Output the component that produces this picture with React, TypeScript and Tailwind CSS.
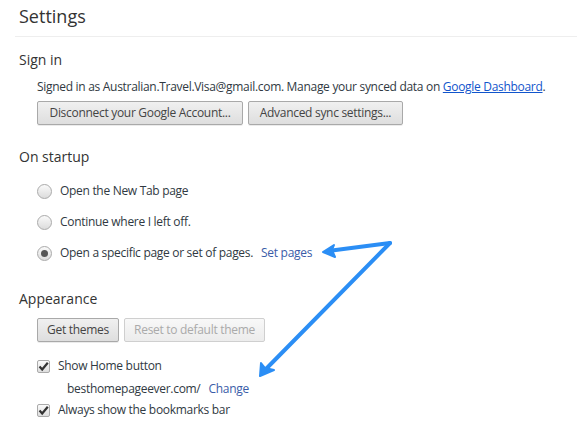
export default function App() {
  const btn =
    "h-6 whitespace-nowrap rounded-[2px] border border-[#a9a9a9] bg-gradient-to-b from-[#f0f0f0] to-[#dedede] px-[9px] text-[12px] tracking-[-0.3px] text-[#444] shadow-[0_1px_0_rgba(0,0,0,0.08)]"
  const btnOff =
    "h-6 whitespace-nowrap rounded-[2px] border border-[#cfcfcf] bg-gradient-to-b from-[#f8f8f8] to-[#ececec] px-[9px] text-[12px] tracking-[-0.3px] text-[#aaa]"

  const Radio = ({ on }: { on?: boolean }) => (
    <span className="flex h-[15px] w-[15px] items-center justify-center rounded-full border border-[#aaa] bg-gradient-to-b from-[#fafafa] to-[#dcdcdc]">
      {on && <span className="h-[7px] w-[7px] rounded-full bg-[#555]" />}
    </span>
  )

  const Check = () => (
    <span className="flex h-[13px] w-[13px] items-center justify-center rounded-[2px] border border-[#aaa] bg-gradient-to-b from-[#fafafa] to-[#dedede]">
      <svg width="11" height="11" viewBox="0 0 11 11">
        <path d="M1.5 5.5 L4.2 8.5 L9.8 1.8" fill="none" stroke="#333" strokeWidth="2.2" />
      </svg>
    </span>
  )

  return (
    <div className="relative h-[443px] w-[577px] overflow-hidden bg-white font-['Open_Sans',sans-serif] text-[12px] tracking-[-0.3px] text-[#303942]">
      <h1 className="pl-[19px] pt-[3px] text-[18px] leading-[26px] tracking-normal text-[#333]">Settings</h1>
      <div className="ml-[15px] mt-[7px] border-t border-[#eee]" />

      <section className="pl-[19px] pt-[13px]">
        <h2 className="text-[14px] leading-[20px] tracking-normal text-[#333]">Sign in</h2>
        <div className="pl-[18px]">
          <p className="mt-[9px] leading-[16px]">
            Signed in as Australian.Travel.Visa@gmail.com. Manage your synced data on{" "}
            <span className="text-[#15c] underline">Google Dashboard</span>.
          </p>
          <div className="mt-[6px] flex gap-[5px]">
            <button className={`${btn} w-[206px]`}>Disconnect your Google Account...</button>
            <button className={`${btn} w-[155px]`}>Advanced sync settings...</button>
          </div>
        </div>
      </section>

      <section className="pl-[19px] pt-[22px]">
        <h2 className="text-[14px] leading-[20px] tracking-normal text-[#333]">On startup</h2>
        <div className="flex flex-col gap-[15px] pl-[18px] pt-[16px]">
          <label className="flex h-[16px] items-center gap-[8px]">
            <Radio />
            Open the New Tab page
          </label>
          <label className="flex h-[16px] items-center gap-[8px]">
            <Radio />
            Continue where I left off.
          </label>
          <label className="flex h-[16px] items-center gap-[8px]">
            <Radio on />
            <span>
              Open a specific page or set of pages.
              <span className="ml-[8px] text-[#3a5ca8]">Set pages</span>
            </span>
          </label>
        </div>
      </section>

      <section className="pl-[19px] pt-[28px]">
        <h2 className="text-[14px] leading-[20px] tracking-normal text-[#333]">Appearance</h2>
        <div className="pl-[18px]">
          <div className="mt-[9px] flex gap-[5px]">
            <button className={`${btn} w-[82px]`}>Get themes</button>
            <button className={`${btnOff} w-[141px]`}>Reset to default theme</button>
          </div>
          <label className="mt-[16px] flex h-[16px] items-center gap-[8px]">
            <Check />
            Show Home button
          </label>
          <p className="mt-[7px] h-[16px] pl-[30px] leading-[16px]">
            besthomepageever.com/
            <span className="ml-[8px] text-[#3a5ca8]">Change</span>
          </p>
          <label className="mt-[5px] flex h-[16px] items-center gap-[8px]">
            <Check />
            Always show the bookmarks bar
          </label>
        </div>
      </section>

      <svg className="absolute left-0 top-0" width="577" height="443" viewBox="0 0 577 443">
        <g fill="none" stroke="#2b8ef5" strokeWidth="4" strokeLinecap="round" strokeLinejoin="round">
          <path d="M390 243 L328 251" />
          <path d="M390 243 L264 371" />
        </g>
        <path d="M323 252 L334 245 L332 250 L335 257 Z" fill="#2b8ef5" stroke="#2b8ef5" strokeWidth="2" strokeLinejoin="round" />
        <path d="M260 376 L261 363 L265 368 L274 370 Z" fill="#2b8ef5" stroke="#2b8ef5" strokeWidth="2" strokeLinejoin="round" />
      </svg>
    </div>
  )
}
